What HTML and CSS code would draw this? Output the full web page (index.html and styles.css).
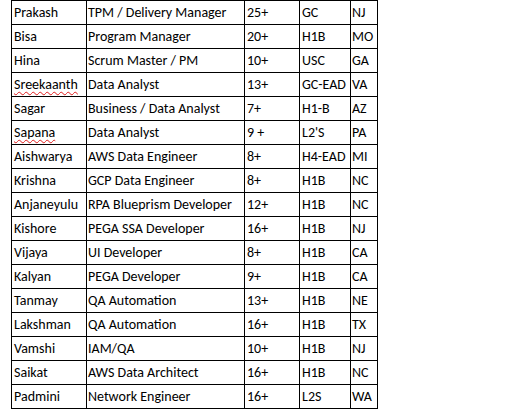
FILE: index.html
```html
<!DOCTYPE html>
<html>
<head>
<meta charset="utf-8">
<link rel="stylesheet" href="styles.css">
</head>
<body>
<table class="grid">
  <colgroup>
    <col class="c-name"><col class="c-role"><col class="c-exp"><col class="c-visa"><col class="c-state">
  </colgroup>
  <tbody>
    <tr><td>Prakash</td><td>TPM / Delivery Manager</td><td>25+</td><td>GC</td><td>NJ</td></tr>
    <tr><td>Bisa</td><td>Program Manager</td><td>20+</td><td>H1B</td><td>MO</td></tr>
    <tr><td>Hina</td><td>Scrum Master / PM</td><td>10+</td><td>USC</td><td>GA</td></tr>
    <tr><td><span class="spell">Sreekaanth</span></td><td>Data Analyst</td><td>13+</td><td>GC-EAD</td><td>VA</td></tr>
    <tr><td>Sagar</td><td>Business / Data Analyst</td><td>7+</td><td>H1-B</td><td>AZ</td></tr>
    <tr><td><span class="spell">Sapana</span></td><td>Data Analyst</td><td>9 +</td><td>L2'S</td><td>PA</td></tr>
    <tr><td>Aishwarya</td><td>AWS Data Engineer</td><td>8+</td><td>H4-EAD</td><td>MI</td></tr>
    <tr><td>Krishna</td><td>GCP Data Engineer</td><td>8+</td><td>H1B</td><td>NC</td></tr>
    <tr><td>Anjaneyulu</td><td>RPA Blueprism Developer</td><td>12+</td><td>H1B</td><td>NC</td></tr>
    <tr><td>Kishore</td><td>PEGA SSA Developer</td><td>16+</td><td>H1B</td><td>NJ</td></tr>
    <tr><td>Vijaya</td><td>UI Developer</td><td>8+</td><td>H1B</td><td>CA</td></tr>
    <tr><td>Kalyan</td><td>PEGA Developer</td><td>9+</td><td>H1B</td><td>CA</td></tr>
    <tr><td>Tanmay</td><td>QA Automation</td><td>13+</td><td>H1B</td><td>NE</td></tr>
    <tr><td>Lakshman</td><td>QA Automation</td><td>16+</td><td>H1B</td><td>TX</td></tr>
    <tr><td>Vamshi</td><td>IAM/QA</td><td>10+</td><td>H1B</td><td>NJ</td></tr>
    <tr><td>Saikat</td><td>AWS Data Architect</td><td>16+</td><td>H1B</td><td>NC</td></tr>
    <tr><td>Padmini</td><td>Network Engineer</td><td>16+</td><td>L2S</td><td>WA</td></tr>
  </tbody>
</table>
</body>
</html>
```

FILE: styles.css
```css
html, body {
  margin: 0;
  padding: 0;
  background: #ffffff;
}

body {
  font-family: Carlito, Lato, "Liberation Sans", sans-serif;
  font-size: 14px;
  color: #000000;
}

.grid {
  border-collapse: separate;
  border-spacing: 0;
  table-layout: fixed;
  margin-left: 11px;
  border-top: 1px solid #000;
  border-left: 1px solid #000;
  width: 366px;
}

.c-name { width: 75px; }
.c-role { width: 158px; }
.c-exp { width: 55px; }
.c-visa { width: 51px; }
.c-state { width: 27px; }

.grid td {
  height: 23px;
  padding: 0 0 0 2px;
  border-right: 1px solid #000;
  border-bottom: 1px solid #000;
  white-space: nowrap;
  overflow: hidden;
  vertical-align: middle;
  line-height: 23px;
  box-sizing: border-box;
}

.grid td:nth-child(2),
.grid td:nth-child(5) {
  padding-left: 1px;
}

.spell {
  text-decoration: underline wavy #e01b1b;
  text-decoration-thickness: 1px;
  text-underline-offset: 2px;
}
```
